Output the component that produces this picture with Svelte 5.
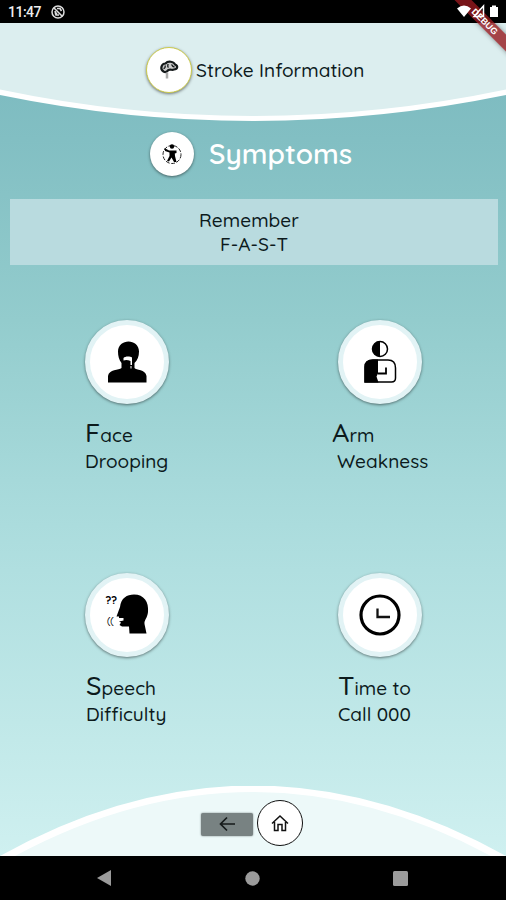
<script lang="ts">
    type Symptom = {
        icon: string;
        initial: string;
        rest: string;
        detail: string;
        offset: number;
        indent: number;
    };

    const symptoms: Symptom[] = [
        { icon: "face", initial: "F", rest: "ace", detail: "Drooping", offset: 85, indent: 0 },
        { icon: "arm", initial: "A", rest: "rm", detail: "Weakness", offset: 79, indent: 5 },
        { icon: "speech", initial: "S", rest: "peech", detail: "Difficulty", offset: 86, indent: 0 },
        { icon: "time", initial: "T", rest: "ime to", detail: "Call 000", offset: 85, indent: 0 },
    ];
</script>

<div class="screen">
    <div class="status-bar">
        <span class="clock">11:47</span>
        <svg class="status-icon" width="14" height="14" viewBox="0 0 14 14">
            <circle cx="7" cy="7" r="6" fill="none" stroke="#ddd" stroke-width="1.5" />
            <path d="M3 3 L11.500 11.500 M4 9.500 L6 8 M6 3.500 H9 L10.500 6 M4 6 L5 10 H8" fill="none" stroke="#ddd" stroke-width="1.600" />
        </svg>
        <svg class="signals" width="46" height="16" viewBox="0 0 46 16">
            <path d="M0 4.500 Q7 -1.500 14 4.500 L7 13 Z" fill="#fff" />
            <path d="M17 12.500 L26.500 2 V12.500 Z" fill="none" stroke="#fff" stroke-width="1.500" />
            <path d="M33 3 H35 V1.500 H39 V3 H41 V13 H33 Z" fill="#fff" />
        </svg>
    </div>

    <div class="debug-banner"><span>DEBUG</span></div>

    <header>
        <svg class="curve" width="506" height="100" viewBox="0 0 506 100">
            <path d="M0 0 H506 V72 Q253 124 0 72 Z" fill="#fff" />
            <path d="M0 0 H506 V66.500 Q253 119.500 0 66.500 Z" fill="#dceeef" />
        </svg>
        <div class="badge brain">
            <svg width="20" height="20" viewBox="0 0 20 20">
                <path d="M4.500 11.500 C0.500 9 2.500 3.500 6.500 3.500 C9 0.500 15 1.500 16 4.500 C19.500 6 18.500 9.500 15 9.500 C13 10.500 11.500 9 9.500 10 C8 11 8 12.500 5.500 12 Z" fill="#ccc" stroke="#14191a" stroke-width="2.200" />
                <path d="M4.500 8.500 C6 8.500 6.500 7 6 5.500 M9 4 C9 6 8 6.500 9.500 7.500 M12.500 4.500 C13.500 5 12.500 6.500 15.500 7" fill="none" stroke="#14191a" stroke-width="1.300" />
                <path d="M8 12.500 V18.500" fill="none" stroke="#aaa" stroke-width="2.500" />
            </svg>
        </div>
        <span class="heading">Stroke Information</span>
    </header>

    <main>
        <div class="title-row">
            <div class="badge">
                <svg width="22" height="22" viewBox="0 0 22 22">
                    <circle cx="11" cy="11.500" r="9" fill="none" stroke="#222" stroke-width="1" stroke-dasharray="4 1.500" />
                    <circle cx="11" cy="3.500" r="2.200" fill="#000" />
                    <path d="M3.500 5 L8 7.500 H15.500 V10 L13.800 10.500 L14 13 L15.500 19 H13 L10.500 14.500 L8 18.500 L6 18 L8.500 13 V9.500 L4 8 Z" fill="#000" />
                </svg>
            </div>
            <h1>Symptoms</h1>
        </div>

        <div class="reminder">
            <span class="remember">Remember</span>
            <span class="fast">F-A-S-T</span>
        </div>

        <div class="symptoms">
            {#each symptoms as symptom (symptom.icon)}
                <div class="symptom">
                    <button class="symptom-btn" aria-label={symptom.detail}>
                        {#if symptom.icon === "face"}
                            <svg width="48" height="48" viewBox="0 0 48 48">
                                <path d="M15 13.500 C15 0 36 0 36 13.500 C36 18.500 34.500 22 31.500 25 V30 C33 32.500 42.500 31 43.500 38 V44.500 H5 V38 C6 31 16 32.500 18.500 30 V25 C16 22 15 18 15 13.500 Z" fill="#000" />
                                <path d="M20.500 20 C22 18 27 18 29 19.500 V27 H27.500 V23 C25 22 23 21.500 20.500 22.500 Z" fill="#fff" />
                                <path d="M28 28 V30.500" stroke="#fff" stroke-width="1" />
                            </svg>
                        {:else if symptom.icon === "arm"}
                            <svg width="48" height="48" viewBox="0 0 48 48">
                                <circle cx="24" cy="11" r="7.500" fill="#fff" stroke="#000" stroke-width="1.500" />
                                <path d="M24 3.500 A7.500 7.500 0 0 0 24 18.500 Z" fill="#000" />
                                <path d="M9 44 V29 Q9 22 17 22 H32 Q39.500 22 39.500 30 V40 Q39.500 44 35.500 44 Z" fill="#fff" stroke="#000" stroke-width="1.500" />
                                <path d="M8.500 44.500 V29 Q8.500 21.500 17 21.500 H22 V35.500 L20.500 38.500 L22.500 44.500 Z" fill="#000" />
                                <path d="M22 35.500 H30 V29.500" fill="none" stroke="#000" stroke-width="1.800" />
                            </svg>
                        {:else if symptom.icon === "speech"}
                            <svg width="52" height="48" viewBox="0 0 52 48">
                                <path d="M19 16 C20 7 26 3.500 33 3.500 C43 3.500 48 11 47 21 C46.500 27 43 29 43.500 33 L45.500 42.500 H28.500 L28 35.500 H21 L18.500 34 L20 31.500 L18 30.500 L22.500 29.500 V27 H18 V25.500 H15.500 Z" fill="#000" />
                                <text x="4.500" y="13" font-size="11" font-weight="700">??</text>
                                <text x="6" y="33" font-size="9">((</text>
                            </svg>
                        {:else}
                            <svg width="48" height="48" viewBox="0 0 48 48">
                                <circle cx="24" cy="24" r="19" fill="#fff" stroke="#000" stroke-width="3.200" />
                                <path d="M21.500 17.500 V26 H34" fill="none" stroke="#111" stroke-width="2.300" />
                            </svg>
                        {/if}
                    </button>
                    <div class="label" style="margin-left: {symptom.offset}px">
                        <div class="line"><span class="initial">{symptom.initial}</span>{symptom.rest}</div>
                        <div class="line" style="padding-left: {symptom.indent}px">{symptom.detail}</div>
                    </div>
                </div>
            {/each}
        </div>
    </main>

    <footer>
        <svg class="curve" width="506" height="70" viewBox="0 0 506 70">
            <path d="M0 70 Q253 -71 506 70 Z" fill="#fff" />
            <path d="M15 70 Q253 -58 491 70 Z" fill="#edf9f9" />
        </svg>
        <button class="back-btn" aria-label="Back">
            <svg width="18" height="16" viewBox="0 0 18 16">
                <path d="M17 8 H2 M9 1.500 L2.500 8 L9 14.500" fill="none" stroke="#151a1a" stroke-width="1.700" />
            </svg>
        </button>
        <button class="home-btn" aria-label="Home">
            <svg width="20" height="20" viewBox="0 0 20 20">
                <path d="M2 10.500 L10 3 L18 10.500 M4.500 9 V17.500 H8 V11.500 H12 V17.500 H15.500 V9" fill="none" stroke="#111" stroke-width="1.500" />
            </svg>
        </button>
    </footer>

    <nav>
        <svg width="14" height="16" viewBox="0 0 14 16"><path d="M14 0 V16 L0 8 Z" fill="#9b9b9b" /></svg>
        <svg width="15" height="15" viewBox="0 0 15 15"><circle cx="7.500" cy="7.500" r="7.200" fill="#9b9b9b" /></svg>
        <svg width="15" height="15" viewBox="0 0 15 15"><rect width="15" height="15" rx="1.500" fill="#9b9b9b" /></svg>
    </nav>
</div>

<style>
    :global(body) {
        margin: 0;
        background: #000;
    }

    .screen {
        position: relative;
        display: flex;
        flex-direction: column;
        width: 506px;
        height: 900px;
        overflow: hidden;
        box-sizing: border-box;
        color: #0c1a1c;
        font-family: Quicksand, Lato, sans-serif;
        font-weight: 500;
        letter-spacing: 0.05px;
        background: linear-gradient(#79b8be 23px, #82bfc3 140px, #93cccd 320px, #a6d9da 480px, #b0dfe0 570px, #c2e9e9 740px, #cff0f0 855px);
    }

    button {
        padding: 0;
        border: none;
        font: inherit;
    }

    .status-bar {
        display: flex;
        align-items: center;
        height: 23px;
        flex: none;
        background: #000;
    }

    .clock {
        width: 43px;
        padding-left: 8px;
        color: #eee;
        font: 500 14px/24px Roboto, sans-serif;
        letter-spacing: -0.5px;
    }

    .signals {
        position: relative;
        z-index: 3;
        margin-left: auto;
        margin-right: 3px;
        margin-top: 1px;
    }

    .debug-banner {
        position: absolute;
        z-index: 2;
        top: 14px;
        right: -38px;
        width: 122px;
        height: 12px;
        background: rgba(150, 25, 30, 0.8);
        box-shadow: 0 0 5px rgba(0, 0, 0, 0.4);
        transform: rotate(45deg);
        color: #fff;
        text-align: center;
        font: bold 9px/13px "Liberation Sans", sans-serif;
    }

    .debug-banner span {
        padding-left: 5px;
    }

    header {
        position: relative;
        display: flex;
        align-items: center;
        height: 93px;
        padding-left: 146px;
        flex: none;
    }

    .curve {
        position: absolute;
        left: 0;
        top: 0;
    }

    .badge {
        display: flex;
        position: relative;
        align-items: center;
        justify-content: center;
        width: 44px;
        height: 44px;
        border-radius: 50%;
        background: #fff;
        box-shadow: 0 1px 3px rgba(0, 0, 0, 0.5);
    }

    .brain {
        border: 1px solid #cdcc4c;
    }

    .heading {
        position: relative;
        margin-left: 4px;
        font-size: 19px;
    }

    main {
        flex: 1;
        min-height: 0;
    }

    .title-row {
        display: flex;
        align-items: center;
        height: 76px;
        padding-left: 150px;
    }

    h1 {
        margin: -2px 0 0 15px;
        color: #fff;
        font-size: 28px;
        font-weight: 600;
        letter-spacing: 0.05px;
    }

    .reminder {
        display: flex;
        flex-direction: column;
        height: 66px;
        margin: 7px 8px 0 10px;
        padding-top: 10px;
        box-sizing: border-box;
        background: #b9dbdf;
        font-size: 19px;
        line-height: 23.500px;
    }

    .remember {
        margin-left: 189px;
    }

    .fast {
        margin-left: 210px;
    }

    .symptoms {
        display: grid;
        grid-template-columns: 253px 253px;
        grid-auto-rows: 253px;
        padding-top: 55px;
    }

    .symptom-btn {
        display: flex;
        align-items: center;
        justify-content: center;
        width: 84px;
        height: 84px;
        margin-left: 85px;
        box-sizing: border-box;
        border: 5px solid #e2f3f5;
        border-radius: 50%;
        background: #fff;
        box-shadow: 0 1px 3px rgba(0, 0, 0, 0.5);
    }

    .label {
        padding-top: 10px;
        font-size: 19px;
    }

    .line {
        height: 29px;
        line-height: 36px;
        white-space: nowrap;
    }

    .initial {
        font-size: 27px;
    }

    footer {
        position: relative;
        display: flex;
        align-items: center;
        gap: 4px;
        height: 70px;
        padding-left: 201px;
        flex: none;
    }

    .back-btn {
        position: relative;
        display: flex;
        align-items: center;
        justify-content: center;
        width: 52px;
        height: 23px;
        margin-top: 6px;
        border-radius: 2px;
        background: #788282;
        box-shadow: 0 0 2px #788282;
    }

    .home-btn {
        position: relative;
        display: flex;
        align-items: center;
        justify-content: center;
        width: 46px;
        height: 46px;
        margin-top: 3px;
        box-sizing: border-box;
        border: 1.500px solid #111;
        border-radius: 50%;
        background: #fff;
    }

    nav {
        position: relative;
        display: flex;
        align-items: center;
        justify-content: space-between;
        height: 44px;
        padding: 0 98px 0 97px;
        box-sizing: border-box;
        flex: none;
        background: #000;
    }
</style>
